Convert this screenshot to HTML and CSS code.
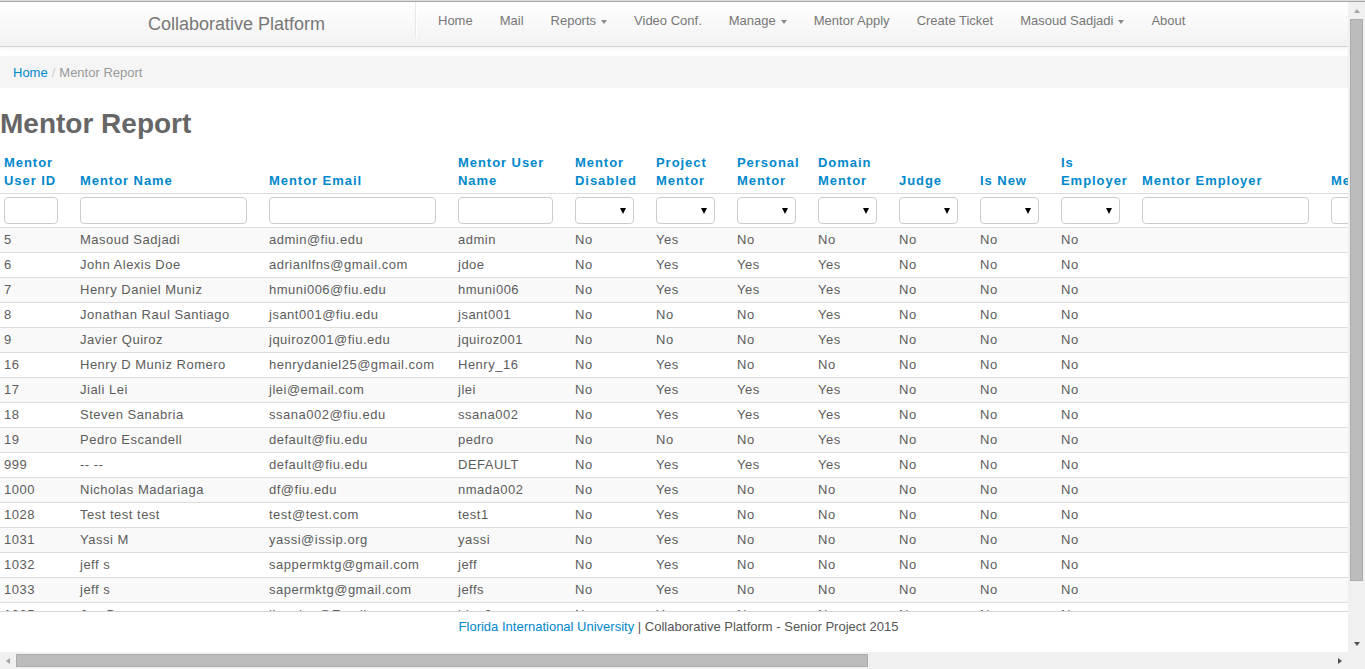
FILE: index.html
```html
<!DOCTYPE html>
<html lang="en">
<head>
<meta charset="utf-8">
<title>Mentor Report</title>
<link rel="stylesheet" href="styles.css">
</head>
<body>
<div class="window">
  <div class="topline"></div>
  <div class="page">
    <div class="navbar">
      <div class="brand">Collaborative Platform</div>
      <div class="divider"></div>
      <ul class="nav">
        <li><a href="#">Home</a></li>
        <li><a href="#">Mail</a></li>
        <li><a href="#">Reports<b class="caret"></b></a></li>
        <li><a href="#">Video Conf.</a></li>
        <li><a href="#">Manage<b class="caret"></b></a></li>
        <li><a href="#">Mentor Apply</a></li>
        <li><a href="#">Create Ticket</a></li>
        <li><a href="#">Masoud Sadjadi<b class="caret"></b></a></li>
        <li><a href="#">About</a></li>
      </ul>
    </div>
    <div class="breadcrumb"><a href="#">Home</a><span class="sep">/</span>Mentor Report</div>
    <h1 class="title">Mentor Report</h1>
    <div class="content">
      <table class="report">
        <colgroup>
          <col class="w76"><col class="w189"><col class="w189"><col class="w117">
          <col class="w81"><col class="w81"><col class="w81"><col class="w81">
          <col class="w81"><col class="w81"><col class="w81"><col class="w189">
          <col class="w189"><col class="w189"><col class="w189"><col class="w189">
        </colgroup>
        <thead>
          <tr class="labels">
            <th>Mentor User ID</th><th>Mentor Name</th><th>Mentor Email</th><th>Mentor User Name</th>
            <th>Mentor Disabled</th><th>Project Mentor</th><th>Personal Mentor</th><th>Domain Mentor</th>
            <th>Judge</th><th>Is New</th><th>Is Employer</th><th>Mentor Employer</th>
            <th>Mentor Phone</th><th>Mentor Field</th><th>Mentor Degree</th><th>Mentor Skills</th>
          </tr>
          <tr class="filters">
            <th><input class="inp" type="text"></th><th><input class="inp" type="text"></th><th><input class="inp" type="text"></th><th><input class="inp" type="text"></th>
            <th><span class="sel"></span></th><th><span class="sel"></span></th><th><span class="sel"></span></th><th><span class="sel"></span></th>
            <th><span class="sel"></span></th><th><span class="sel"></span></th><th><span class="sel"></span></th><th><input class="inp" type="text"></th>
            <th><input class="inp" type="text"></th><th><input class="inp" type="text"></th><th><input class="inp" type="text"></th><th><input class="inp" type="text"></th>
          </tr>
        </thead>
        <tbody>
          <tr><td>5</td><td>Masoud Sadjadi</td><td>admin@fiu.edu</td><td>admin</td><td>No</td><td>Yes</td><td>No</td><td>No</td><td>No</td><td>No</td><td>No</td><td></td><td></td><td></td><td></td><td></td></tr>
          <tr><td>6</td><td>John Alexis Doe</td><td>adrianlfns@gmail.com</td><td>jdoe</td><td>No</td><td>Yes</td><td>Yes</td><td>Yes</td><td>No</td><td>No</td><td>No</td><td></td><td></td><td></td><td></td><td></td></tr>
          <tr><td>7</td><td>Henry Daniel Muniz</td><td>hmuni006@fiu.edu</td><td>hmuni006</td><td>No</td><td>Yes</td><td>Yes</td><td>Yes</td><td>No</td><td>No</td><td>No</td><td></td><td></td><td></td><td></td><td></td></tr>
          <tr><td>8</td><td>Jonathan Raul Santiago</td><td>jsant001@fiu.edu</td><td>jsant001</td><td>No</td><td>No</td><td>No</td><td>Yes</td><td>No</td><td>No</td><td>No</td><td></td><td></td><td></td><td></td><td></td></tr>
          <tr><td>9</td><td>Javier Quiroz</td><td>jquiroz001@fiu.edu</td><td>jquiroz001</td><td>No</td><td>No</td><td>No</td><td>Yes</td><td>No</td><td>No</td><td>No</td><td></td><td></td><td></td><td></td><td></td></tr>
          <tr><td>16</td><td>Henry D Muniz Romero</td><td>henrydaniel25@gmail.com</td><td>Henry_16</td><td>No</td><td>Yes</td><td>No</td><td>No</td><td>No</td><td>No</td><td>No</td><td></td><td></td><td></td><td></td><td></td></tr>
          <tr><td>17</td><td>Jiali Lei</td><td>jlei@email.com</td><td>jlei</td><td>No</td><td>Yes</td><td>Yes</td><td>Yes</td><td>No</td><td>No</td><td>No</td><td></td><td></td><td></td><td></td><td></td></tr>
          <tr><td>18</td><td>Steven Sanabria</td><td>ssana002@fiu.edu</td><td>ssana002</td><td>No</td><td>Yes</td><td>Yes</td><td>Yes</td><td>No</td><td>No</td><td>No</td><td></td><td></td><td></td><td></td><td></td></tr>
          <tr><td>19</td><td>Pedro Escandell</td><td>default@fiu.edu</td><td>pedro</td><td>No</td><td>No</td><td>No</td><td>Yes</td><td>No</td><td>No</td><td>No</td><td></td><td></td><td></td><td></td><td></td></tr>
          <tr><td>999</td><td>-- --</td><td>default@fiu.edu</td><td>DEFAULT</td><td>No</td><td>Yes</td><td>Yes</td><td>Yes</td><td>No</td><td>No</td><td>No</td><td></td><td></td><td></td><td></td><td></td></tr>
          <tr><td>1000</td><td>Nicholas Madariaga</td><td>df@fiu.edu</td><td>nmada002</td><td>No</td><td>Yes</td><td>No</td><td>No</td><td>No</td><td>No</td><td>No</td><td></td><td></td><td></td><td></td><td></td></tr>
          <tr><td>1028</td><td>Test test test</td><td>test@test.com</td><td>test1</td><td>No</td><td>Yes</td><td>No</td><td>No</td><td>No</td><td>No</td><td>No</td><td></td><td></td><td></td><td></td><td></td></tr>
          <tr><td>1031</td><td>Yassi M</td><td>yassi@issip.org</td><td>yassi</td><td>No</td><td>Yes</td><td>No</td><td>No</td><td>No</td><td>No</td><td>No</td><td></td><td></td><td></td><td></td><td></td></tr>
          <tr><td>1032</td><td>jeff s</td><td>sappermktg@gmail.com</td><td>jeff</td><td>No</td><td>Yes</td><td>No</td><td>No</td><td>No</td><td>No</td><td>No</td><td></td><td></td><td></td><td></td><td></td></tr>
          <tr><td>1033</td><td>jeff s</td><td>sapermktg@gmail.com</td><td>jeffs</td><td>No</td><td>Yes</td><td>No</td><td>No</td><td>No</td><td>No</td><td>No</td><td></td><td></td><td></td><td></td><td></td></tr>
          <tr><td>1035</td><td>Joe Doe</td><td>jkandoe@Email.com</td><td>jdoe2</td><td>No</td><td>Yes</td><td>No</td><td>No</td><td>No</td><td>No</td><td>No</td><td></td><td></td><td></td><td></td><td></td></tr>
          <tr><td>1036</td><td>Jane Smith</td><td>jsmith@fiu.edu</td><td>jsmith</td><td>No</td><td>Yes</td><td>No</td><td>No</td><td>No</td><td>No</td><td>No</td><td></td><td></td><td></td><td></td><td></td></tr>
        </tbody>
      </table>
    </div>
    <div class="footer"><a href="#">Florida International University</a> | Collaborative Platform - Senior Project 2015</div>
  </div>
  <div class="vscroll">
    <div class="sbtn"><span class="arr up"></span></div>
    <div class="vthumb"></div>
    <div class="vspace"></div>
    <div class="sbtn"><span class="arr down"></span></div>
  </div>
  <div class="hscroll">
    <div class="hbtn"><span class="arr left"></span></div>
    <div class="hthumb"></div>
    <div class="hspace"></div>
    <div class="hbtn"><span class="arr right"></span></div>
  </div>
  <div class="corner"></div>
</div>
</body>
</html>
```
FILE: styles.css
```css
html, body {
  margin: 0;
  padding: 0;
  overflow: hidden;
  background: #fff;
}

body {
  font-family: "Liberation Sans", Arial, sans-serif;
  font-size: 13px;
  color: #555;
}

.window {
  display: grid;
  grid-template-columns: 1348px 17px;
  grid-template-rows: 2px 650px 17px;
  width: 1365px;
  height: 669px;
}

.topline {
  grid-column: 1 / 3;
  background: linear-gradient(#dcdcdc 0 1px, #a6a6a6 1px 2px);
}

.page {
  display: flex;
  flex-direction: column;
  overflow: hidden;
  background: #fff;
  min-width: 0;
}

/* navbar */
.navbar {
  flex: none;
  display: flex;
  height: 45px;
  box-sizing: border-box;
  border-bottom: 1px solid #d4d4d4;
  background: linear-gradient(#ffffff, #f2f2f2);
  box-shadow: 0 1px 4px rgba(0, 0, 0, 0.07);
  position: relative;
  z-index: 1;
}

.brand {
  width: 415px;
  box-sizing: border-box;
  padding-left: 148px;
  align-self: center;
  font-size: 18px;
  line-height: 20px;
  color: #777;
}

.divider {
  align-self: flex-start;
  height: 36px;
  border-left: 1px solid #e8e8e8;
  border-right: 1px solid #ffffff;
  margin-right: 7.5px;
}

.nav {
  display: flex;
  list-style: none;
  margin: 0;
  padding: 0;
}

.nav a {
  display: block;
  padding: 9px 13.5px;
  line-height: 20px;
  font-size: 13px;
  color: #777;
  text-decoration: none;
  white-space: nowrap;
}

.caret {
  display: inline-block;
  width: 0;
  height: 0;
  margin-left: 5px;
  vertical-align: middle;
  border-top: 4px solid #8a8a8a;
  border-left: 3px solid transparent;
  border-right: 3px solid transparent;
}

/* breadcrumb */
.breadcrumb {
  flex: none;
  margin-top: 9px;
  height: 32px;
  line-height: 33px;
  padding: 0 13px;
  background: #f5f5f5;
  color: #999;
}

.breadcrumb a {
  color: #0088cc;
  text-decoration: none;
}

.breadcrumb .sep {
  color: #ccc;
  padding: 0 4px;
}

.title {
  flex: none;
  margin: 19px 0 9px;
  font-size: 28px;
  line-height: 34px;
  font-weight: bold;
  color: #666;
}

/* table */
.content {
  flex: 1;
  min-height: 0;
  overflow: hidden;
}

.report {
  border-collapse: separate;
  border-spacing: 0;
  table-layout: fixed;
  width: 2083px;
}

.w76 { width: 76px; }
.w81 { width: 81px; }
.w117 { width: 117px; }
.w189 { width: 189px; }

.report th,
.report td {
  text-align: left;
  padding: 4px 18px 4px 4px;
}

.labels th {
  vertical-align: bottom;
  padding: 4px 18px 3px 4px;
  line-height: 18px;
  font-weight: bold;
  letter-spacing: 0.95px;
  color: #0088cc;
  border-bottom: 1px solid #dddddd;
}

.filters th {
  padding: 3px 18px 3px 4px;
}

.inp {
  display: block;
  box-sizing: border-box;
  width: 100%;
  height: 27px;
  margin: 0;
  padding: 0 6px;
  border: 1px solid #cccccc;
  border-radius: 4px;
  background: #fff;
  font: inherit;
}

.sel {
  display: flex;
  align-items: center;
  justify-content: flex-end;
  box-sizing: border-box;
  width: 100%;
  height: 27px;
  padding-right: 7px;
  border: 1px solid #cccccc;
  border-radius: 4px;
  background: #fff;
}

.sel::after {
  content: "";
  width: 0;
  height: 0;
  border-top: 6px solid #000;
  border-left: 3.5px solid transparent;
  border-right: 3.5px solid transparent;
}

.report tbody td {
  border-top: 1px solid #dddddd;
  line-height: 16px;
  letter-spacing: 0.5px;
  color: #5c5c5c;
  white-space: nowrap;
  overflow: hidden;
}

.report tbody tr:nth-child(odd) td {
  background: #f9f9f9;
}

/* footer */
.footer {
  flex: none;
  height: 41px;
  box-sizing: border-box;
  border-top: 1px solid #d8d8d8;
  padding: 7px 0 0 9px;
  line-height: 16px;
  text-align: center;
  color: #555;
  background: #fff;
}

.footer a {
  color: #0088cc;
  text-decoration: none;
}

/* scrollbars */
.vscroll {
  display: flex;
  flex-direction: column;
  background: #f0f0f0;
}

.sbtn {
  flex: none;
  height: 17px;
  display: flex;
  align-items: center;
  justify-content: center;
}

.vthumb {
  flex: none;
  height: 562px;
  margin: 0 2px;
  box-sizing: border-box;
  background: #bcbcbc;
  border: 1px solid #acacac;
}

.vspace,
.hspace {
  flex: 1;
}

.hscroll {
  display: flex;
  background: #f0f0f0;
}

.hbtn {
  flex: none;
  width: 16px;
  display: flex;
  align-items: center;
  justify-content: center;
}

.hthumb {
  flex: none;
  width: 852px;
  margin: 2px 0;
  box-sizing: border-box;
  background: #bcbcbc;
  border: 1px solid #acacac;
}

.corner {
  background: #f0f0f0;
}

.arr {
  width: 0;
  height: 0;
}

.arr.up {
  border-bottom: 4px solid #a3a3a3;
  border-left: 3.5px solid transparent;
  border-right: 3.5px solid transparent;
}

.arr.down {
  border-top: 4px solid #505050;
  border-left: 3.5px solid transparent;
  border-right: 3.5px solid transparent;
}

.arr.left {
  border-right: 4px solid #a3a3a3;
  border-top: 3.5px solid transparent;
  border-bottom: 3.5px solid transparent;
}

.arr.right {
  border-left: 4px solid #505050;
  border-top: 3.5px solid transparent;
  border-bottom: 3.5px solid transparent;
}
```
